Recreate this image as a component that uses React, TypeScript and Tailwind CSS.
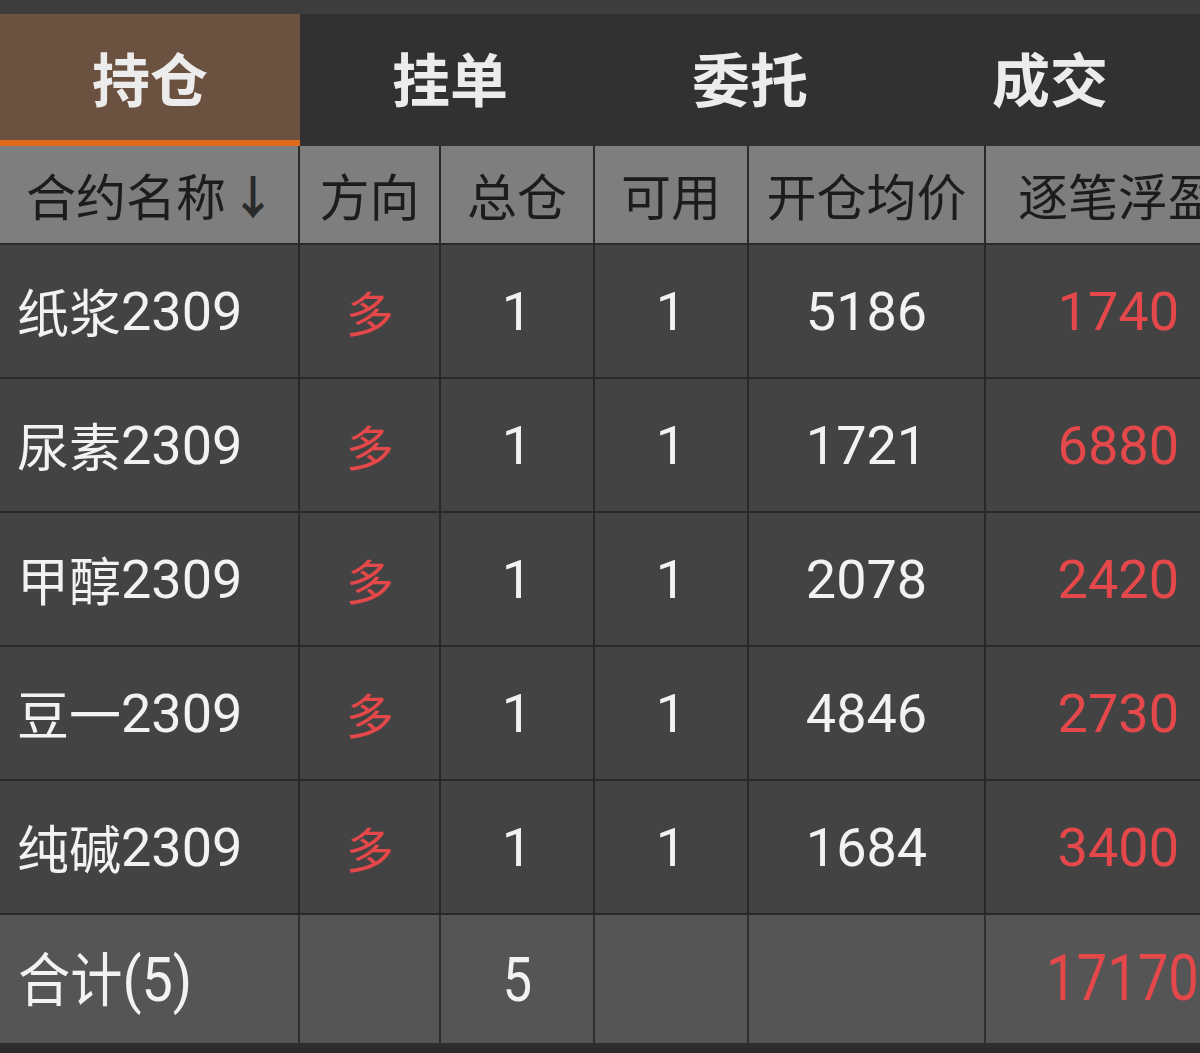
import React from "react";

const rows = [
  { name: "纸浆", code: "2309", total: "1", avail: "1", price: "5186", pnl: "1740" },
  { name: "尿素", code: "2309", total: "1", avail: "1", price: "1721", pnl: "6880" },
  { name: "甲醇", code: "2309", total: "1", avail: "1", price: "2078", pnl: "2420" },
  { name: "豆一", code: "2309", total: "1", avail: "1", price: "4846", pnl: "2730" },
  { name: "纯碱", code: "2309", total: "1", avail: "1", price: "1684", pnl: "3400" },
];

const font = { fontFamily: "Roboto, 'Noto Sans CJK SC', sans-serif" };
const cjk = { fontFamily: "'Noto Sans CJK SC', sans-serif" };

export default function App() {
  return (
    <div
      className="w-[1200px] h-[1053px] overflow-hidden bg-[#2a2a2a] flex flex-col"
      style={font}
    >
      <div className="h-[14px] bg-[#3d3d3d] shrink-0" />
      <div className="flex h-[132px] shrink-0 bg-[#313131]">
        <div className="w-[300px] flex flex-col bg-[#6b5140]">
          <div className="flex-1 flex items-center justify-center text-[58px] font-bold text-[#ececec]" style={cjk}>
            持仓
          </div>
          <div className="h-[6px] bg-[#e06a1c]" />
        </div>
        {["挂单", "委托", "成交"].map((t) => (
          <div
            key={t}
            className="w-[300px] flex items-center justify-center pb-[6px] text-[58px] font-bold text-[#ececec]"
            style={cjk}
          >
            {t}
          </div>
        ))}
      </div>
      <div
        className="flex h-[99px] shrink-0 bg-[#7e7e7e] text-[#1c1c1c] text-[50px] border-b-2 border-[#2a2a2a]"
        style={cjk}
      >
        <div className="w-[300px] shrink-0 flex items-center pl-[26px] border-r-2 border-[#2a2a2a] whitespace-nowrap">
          合约名称<span className="ml-[4px] text-[46px] font-bold text-[#2a2a2a]">↓</span>
        </div>
        <div className="w-[141px] shrink-0 flex items-center justify-center border-r-2 border-[#2a2a2a]">方向</div>
        <div className="w-[154px] shrink-0 flex items-center justify-center border-r-2 border-[#2a2a2a]">总仓</div>
        <div className="w-[154px] shrink-0 flex items-center justify-center border-r-2 border-[#2a2a2a]">可用</div>
        <div className="w-[237px] shrink-0 flex items-center justify-center border-r-2 border-[#2a2a2a]">开仓均价</div>
        <div className="w-[214px] shrink-0 flex items-center pl-[32px] whitespace-nowrap overflow-hidden">逐笔浮盈</div>
      </div>
      {rows.map((r) => (
        <div key={r.name} className="flex h-[134px] shrink-0 bg-[#434343] text-[#f2f2f2] text-[54px] border-b-2 border-[#282828]">
          <div className="w-[300px] shrink-0 flex items-center pl-[17px] border-r-2 border-[#282828] whitespace-nowrap">
            <span style={cjk} className="text-[52px]">{r.name}</span>
            <span>{r.code}</span>
          </div>
          <div className="w-[141px] shrink-0 flex items-center justify-center border-r-2 border-[#282828] text-[#e5484a] text-[48px]" style={cjk}>
            多
          </div>
          <div className="w-[154px] shrink-0 flex items-center justify-center border-r-2 border-[#282828]">{r.total}</div>
          <div className="w-[154px] shrink-0 flex items-center justify-center border-r-2 border-[#282828]">{r.avail}</div>
          <div className="w-[237px] shrink-0 flex items-center justify-center border-r-2 border-[#282828]">{r.price}</div>
          <div className="w-[214px] shrink-0 flex items-center justify-end pr-[21px] text-[#e5484a]">{r.pnl}</div>
        </div>
      ))}
      <div className="flex h-[133px] shrink-0 bg-[#555555] text-[#f2f2f2] text-[62px] border-b-[5px] border-[#2e2e2e]">
        <div className="w-[300px] shrink-0 flex items-center pl-[18px] border-r-2 border-[#2e2e2e] whitespace-nowrap">
          <span className="inline-block origin-left scale-x-[0.9]">
            <span style={cjk} className="text-[58px]">合计</span>(5)
          </span>
        </div>
        <div className="w-[141px] shrink-0 border-r-2 border-[#2e2e2e]" />
        <div className="w-[154px] shrink-0 flex items-center justify-center border-r-2 border-[#2e2e2e]">
          <span className="inline-block scale-x-[0.85]">5</span>
        </div>
        <div className="w-[154px] shrink-0 border-r-2 border-[#2e2e2e]" />
        <div className="w-[237px] shrink-0 border-r-2 border-[#2e2e2e]" />
        <div className="w-[214px] shrink-0 flex items-center pl-[60px] text-[#e5484a] whitespace-nowrap overflow-hidden">
          <span className="inline-block origin-left scale-x-[0.85] text-[64px]">17170</span>
        </div>
      </div>
    </div>
  );
}
